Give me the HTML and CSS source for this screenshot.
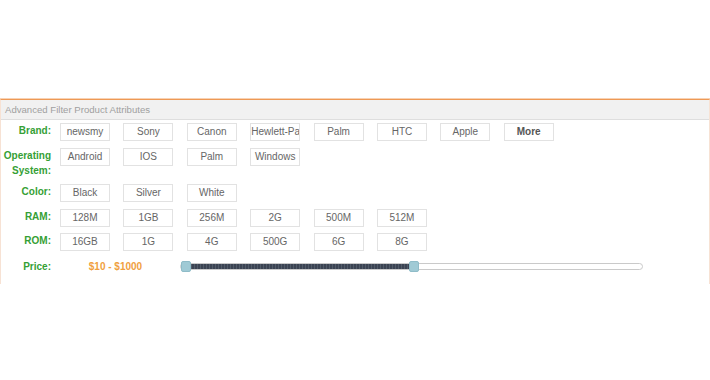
FILE: index.html
```html
<!DOCTYPE html>
<html lang="en">
<head>
  <meta charset="UTF-8" />
  <title>Advanced Filter</title>
  <link rel="stylesheet" href="styles.css">
</head>
<body>

  <div class="filter-box">
    <div class="filter-title">Advanced Filter Product Attributes</div>

    <div class="filter-body">
      <div class="filter-row">
        <div class="filter-label">Brand:</div>
        <div class="options">
          <span class="opt">newsmy</span>
          <span class="opt">Sony</span>
          <span class="opt">Canon</span>
          <span class="opt">Hewlett-Packard</span>
          <span class="opt">Palm</span>
          <span class="opt">HTC</span>
          <span class="opt">Apple</span>
          <span class="opt more">More</span>
        </div>
      </div>

      <div class="filter-row">
        <div class="filter-label">Operating System:</div>
        <div class="options">
          <span class="opt">Android</span>
          <span class="opt">IOS</span>
          <span class="opt">Palm</span>
          <span class="opt">Windows</span>
        </div>
      </div>

      <div class="filter-row">
        <div class="filter-label">Color:</div>
        <div class="options">
          <span class="opt">Black</span>
          <span class="opt">Silver</span>
          <span class="opt">White</span>
        </div>
      </div>

      <div class="filter-row">
        <div class="filter-label">RAM:</div>
        <div class="options">
          <span class="opt">128M</span>
          <span class="opt">1GB</span>
          <span class="opt">256M</span>
          <span class="opt">2G</span>
          <span class="opt">500M</span>
          <span class="opt">512M</span>
        </div>
      </div>

      <div class="filter-row">
        <div class="filter-label">ROM:</div>
        <div class="options">
          <span class="opt">16GB</span>
          <span class="opt">1G</span>
          <span class="opt">4G</span>
          <span class="opt">500G</span>
          <span class="opt">6G</span>
          <span class="opt">8G</span>
        </div>
      </div>

      <div class="filter-row price-row">
        <div class="filter-label">Price:</div>
        <div class="price-value">$10 - $1000</div>
        <div class="slider">
          <div class="slider-range" style="width: 49.5%;"></div>
          <span class="handle" style="left: 0%;"></span>
          <span class="handle" style="left: 49.5%;"></span>
        </div>
      </div>
    </div>
  </div>

</body>
</html>
```

FILE: styles.css
```css
body {
  margin: 0;
  padding-top: 99px;
  font-family: "Liberation Sans", Arial, sans-serif;
  font-size: 10px;
  background: #fff;
}

.filter-box {
  width: 710px;
  box-sizing: border-box;
  border-top: 1px solid #ee9955;
  border-left: 1px solid #f7e2d4;
  border-right: 1px solid #f7e2d4;
  box-shadow: 0 -1px 0 #f8d2b4;
}

.filter-title {
  height: 19px;
  line-height: 19px;
  padding-left: 4px;
  background-color: #f1f1f1;
  border-bottom: 1px solid #dedede;
  color: #a0a0a0;
  font-size: 9.6px;
}

.filter-body {
  padding: 3px 0 3px;
}

.filter-row {
  display: flex;
  align-items: flex-start;
  margin-bottom: 7px;
}

.filter-row:nth-child(2),
.filter-row:nth-child(4) {
  margin-bottom: 6px;
}

.filter-label {
  width: 50px;
  flex-shrink: 0;
  margin-right: 9px;
  text-align: right;
  font-weight: bold;
  color: #35a035;
  line-height: 15px;
}

.options {
  display: flex;
  gap: 13.4px;
}

.opt {
  width: 50px;
  height: 18px;
  box-sizing: border-box;
  border: 1px solid #e2e2e2;
  line-height: 16px;
  text-align: center;
  color: #666;
  white-space: nowrap;
  overflow: hidden;
  cursor: pointer;
}

.opt.more {
  font-weight: bold;
  color: #555;
}

.price-row {
  margin-top: 8px;
  align-items: center;
}

.price-value {
  width: 120px;
  box-sizing: border-box;
  padding-right: 9px;
  text-align: center;
  color: #f0a040;
  font-weight: bold;
}

.slider {
  position: relative;
  width: 463px;
  height: 7px;
  box-sizing: border-box;
  border: 1px solid #cacaca;
  border-radius: 4px;
  background: #fff;
}

.slider-range {
  height: 100%;
  margin-left: 5px;
  background: repeating-linear-gradient(90deg, #3b4352 0, #3b4352 2px, #515b69 2px, #515b69 3px);
}

.handle {
  position: absolute;
  top: -3px;
  width: 10px;
  height: 11px;
  box-sizing: border-box;
  border: 1px solid #8fbcc8;
  border-radius: 2px;
  background: #a0cad5;
}
```
